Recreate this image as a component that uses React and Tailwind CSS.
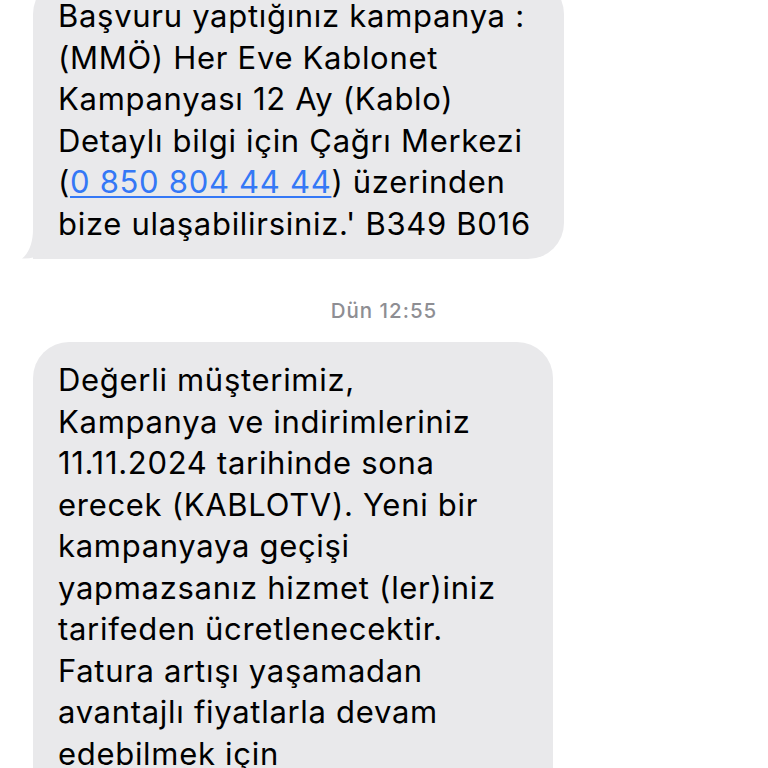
export default function App() {
  const font = { fontFamily: 'Inter, "Noto Sans", sans-serif' };
  return (
    <div className="w-[768px] h-[768px] overflow-hidden bg-white" style={font}>
      <div className="-mt-[22px] pl-[33px]">
        <div className="relative w-[531px] rounded-[36px] rounded-bl-none bg-[#e9e9eb] pl-[25px] pr-[20px] pt-[17px] pb-[15px] text-[31px] leading-[41.5px] text-black tracking-[0.7px]">
          <p className="whitespace-nowrap">
            Başvuru yaptığınız kampanya :<br />
            (MMÖ) Her Eve Kablonet<br />
            Kampanyası 12 Ay (Kablo)<br />
            Detaylı bilgi için Çağrı Merkezi<br />
            (<span className="text-[#3478f6] underline decoration-[1.5px] underline-offset-[3px]">0 850 804 44 44</span>) üzerinden<br />
            bize ulaşabilirsiniz.' B349 B016
          </p>
          <svg className="absolute -left-[11px] bottom-0" width="30" height="30" viewBox="0 0 30 30">
            <path d="M11 0 L11 0 C11 14 7 24 0 29.5 C8 30 15 28 20 25 C23 27 26 29 30 30 L11 30 Z" fill="#e9e9eb" />
          </svg>
        </div>
      </div>
      <div className="mt-[40px] mb-[19px] text-center text-[20.5px] leading-[24px] font-medium tracking-[1px] text-[#8e8e93]">
        Dün 12:55
      </div>
      <div className="pl-[33px]">
        <div className="w-[520px] rounded-[36px] bg-[#e9e9eb] pl-[25px] pr-[20px] pt-[17px] pb-[14px] text-[31px] leading-[41.5px] text-black tracking-[0.7px]">
          <p className="whitespace-nowrap">
            Değerli müşterimiz,<br />
            Kampanya ve indirimleriniz<br />
            11.11.2024 tarihinde sona<br />
            erecek (KABLOTV). Yeni bir<br />
            kampanyaya geçişi<br />
            yapmazsanız hizmet (ler)iniz<br />
            tarifeden ücretlenecektir.<br />
            Fatura artışı yaşamadan<br />
            avantajlı fiyatlarla devam<br />
            edebilmek için<br />
            kampanya seçiminizi yapınız.
          </p>
        </div>
      </div>
    </div>
  );
}
